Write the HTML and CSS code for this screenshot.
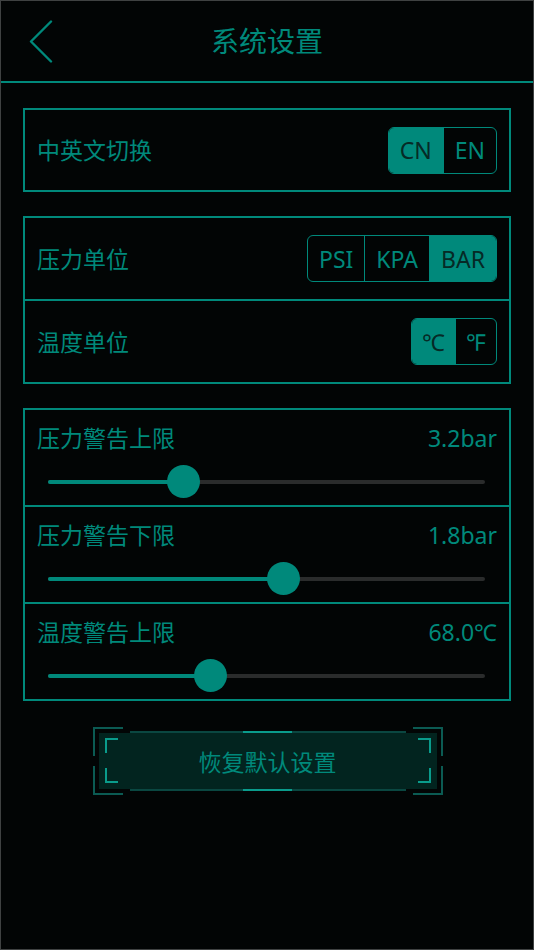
FILE: index.html
```html
<!DOCTYPE html>
<html lang="zh-CN">
<head>
<meta charset="utf-8">
<title>系统设置</title>
<link rel="stylesheet" href="styles.css">
</head>
<body>
<div class="screen">
  <header class="header">
    <div class="back">
      <svg width="24" height="44" viewBox="0 0 24 44" class="back-icon">
        <polyline points="22,1.5 2,21.5 22,41.5" fill="none" stroke="#00897b" stroke-width="2.4" stroke-linecap="round" stroke-linejoin="round"/>
      </svg>
    </div>
    <h1 class="title">系统设置</h1>
    <div></div>
  </header>

  <main class="content">
    <section class="card">
      <div class="row row-a">
        <span class="label">中英文切换</span>
        <div class="seg">
          <span class="opt on">CN</span>
          <span class="opt">EN</span>
        </div>
      </div>
    </section>

    <section class="card">
      <div class="row row-b">
        <span class="label">压力单位</span>
        <div class="seg">
          <span class="opt">PSI</span>
          <span class="opt">KPA</span>
          <span class="opt on">BAR</span>
        </div>
      </div>
      <div class="row row-b">
        <span class="label">温度单位</span>
        <div class="seg">
          <span class="opt narrow on">℃</span>
          <span class="opt narrow">℉</span>
        </div>
      </div>
    </section>

    <section class="card">
      <div class="srow">
        <div class="shead"><span class="label">压力警告上限</span><span class="value">3.2bar</span></div>
        <div class="slider"><div class="track"><div class="fill" style="width:31.1%"></div></div><span class="thumb" style="left:31.1%"></span></div>
      </div>
      <div class="srow">
        <div class="shead"><span class="label">压力警告下限</span><span class="value">1.8bar</span></div>
        <div class="slider"><div class="track"><div class="fill" style="width:53.8%"></div></div><span class="thumb" style="left:53.8%"></span></div>
      </div>
      <div class="srow">
        <div class="shead"><span class="label">温度警告上限</span><span class="value">68.0℃</span></div>
        <div class="slider"><div class="track"><div class="fill" style="width:37.1%"></div></div><span class="thumb" style="left:37.1%"></span></div>
      </div>
    </section>

    <div class="btn-wrap">
      <div class="btn-frame">
        <span class="oc oc-tl"></span><span class="oc oc-tr"></span>
        <span class="oc oc-bl"></span><span class="oc oc-br"></span>
        <span class="edge edge-t"></span><span class="edge edge-b"></span>
        <span class="glow glow-t"></span><span class="glow glow-b"></span>
        <button class="btn">
          <span class="ic ic-tl"></span><span class="ic ic-tr"></span>
          <span class="ic ic-bl"></span><span class="ic ic-br"></span>
          恢复默认设置
        </button>
      </div>
    </div>
  </main>
</div>
</body>
</html>
```

FILE: styles.css
```css
* { box-sizing: border-box; }

html, body {
  margin: 0;
  padding: 0;
  background: #020505;
}

body {
  font-family: "Noto Sans", "Noto Sans CJK SC", sans-serif;
  color: #00897b;
}

.screen {
  width: 534px;
  height: 950px;
  border: 1px solid #3f4242;
  background: #020505;
  display: flex;
  flex-direction: column;
}

.header {
  height: 82px;
  border-bottom: 2px solid #00897b;
  display: grid;
  grid-template-columns: 80px 1fr 80px;
  align-items: center;
}

.back {
  padding-left: 28px;
  display: flex;
  align-items: center;
  padding-top: 2px;
}

.back-icon { display: block; }

.title {
  margin: 0;
  text-align: center;
  font-size: 28px;
  font-weight: 400;
  color: #00897b;
  line-height: 1;
}

.content {
  padding: 25px 22px 0;
  display: flex;
  flex-direction: column;
  gap: 24px;
}

.card {
  border: 2px solid #00897b;
  display: flex;
  flex-direction: column;
}

.row {
  display: flex;
  align-items: center;
  justify-content: space-between;
  padding: 0 12px;
}

.row-a { height: 80px; }
.row-b { height: 81px; }
.row-b + .row-b { border-top: 2px solid #00897b; height: 83px; }

.label {
  font-size: 23px;
  line-height: 28px;
  color: #00897b;
}

.seg {
  display: flex;
  height: 47px;
  border: 1.5px solid #00897b;
  border-radius: 6px;
  overflow: hidden;
}

.opt {
  display: flex;
  align-items: center;
  justify-content: center;
  padding: 0 11px;
  font-size: 23px;
  color: #00897b;
}

.opt + .opt { border-left: 1.5px solid #00897b; }

.opt.on {
  background: #00897b;
  color: #062a26;
}

.opt.narrow {
  padding: 0 10px;
}

.srow {
  height: 95px;
  padding: 14px 12px 0;
}

.srow + .srow { border-top: 2px solid #00897b; height: 97px; }

.shead {
  display: flex;
  justify-content: space-between;
  align-items: center;
  height: 28px;
}

.value {
  font-size: 23px;
  line-height: 28px;
  color: #00897b;
}

.slider {
  position: relative;
  height: 33px;
  margin: 13px 12px 0 11px;
  display: flex;
  align-items: center;
}

.track {
  width: 100%;
  height: 4px;
  border-radius: 2px;
  background: #2a2c2c;
}

.fill {
  height: 100%;
  border-radius: 2px;
  background: #00897b;
}

.thumb {
  position: absolute;
  top: 0;
  width: 33px;
  height: 33px;
  margin-left: -16.5px;
  border-radius: 50%;
  background: #00897b;
}

.btn-wrap {
  display: flex;
  justify-content: center;
  padding-top: 2px;
  padding-left: 1px;
}

.btn-frame {
  position: relative;
  width: 350px;
  height: 68px;
  padding: 6px;
}

.oc {
  position: absolute;
  width: 30px;
  height: 29px;
  border: 0 solid #0b5b53;
}
.oc-tl { left: 0; top: 0; border-left-width: 2px; border-top-width: 2px; }
.oc-tr { right: 0; top: 0; border-right-width: 2px; border-top-width: 2px; }
.oc-bl { left: 0; bottom: 0; border-left-width: 2px; border-bottom-width: 2px; }
.oc-br { right: 0; bottom: 0; border-right-width: 2px; border-bottom-width: 2px; }

.edge {
  position: absolute;
  left: 37px;
  right: 37px;
  height: 2px;
  background: #0a4741;
}
.edge-t { top: 4px; }
.edge-b { bottom: 4px; }

.glow {
  position: absolute;
  left: 50%;
  width: 49px;
  margin-left: -24.5px;
  height: 2px;
  background: #0a9c8c;
}
.glow-t { top: 4px; }
.glow-b { bottom: 4px; }

.btn {
  position: relative;
  width: 100%;
  height: 100%;
  border: 0;
  margin: 0;
  padding: 0;
  background: #02241f;
  font-family: "Noto Sans", "Noto Sans CJK SC", sans-serif;
  font-size: 23px;
  color: #00897b;
  display: flex;
  align-items: center;
  justify-content: center;
}

.ic {
  position: absolute;
  width: 13px;
  height: 15px;
  border: 0 solid #0a9c8c;
}
.ic-tl { left: 6px; top: 5px; border-left-width: 2px; border-top-width: 2px; }
.ic-tr { right: 6px; top: 5px; border-right-width: 2px; border-top-width: 2px; }
.ic-bl { left: 6px; bottom: 6px; border-left-width: 2px; border-bottom-width: 2px; }
.ic-br { right: 6px; bottom: 6px; border-right-width: 2px; border-bottom-width: 2px; }
```
